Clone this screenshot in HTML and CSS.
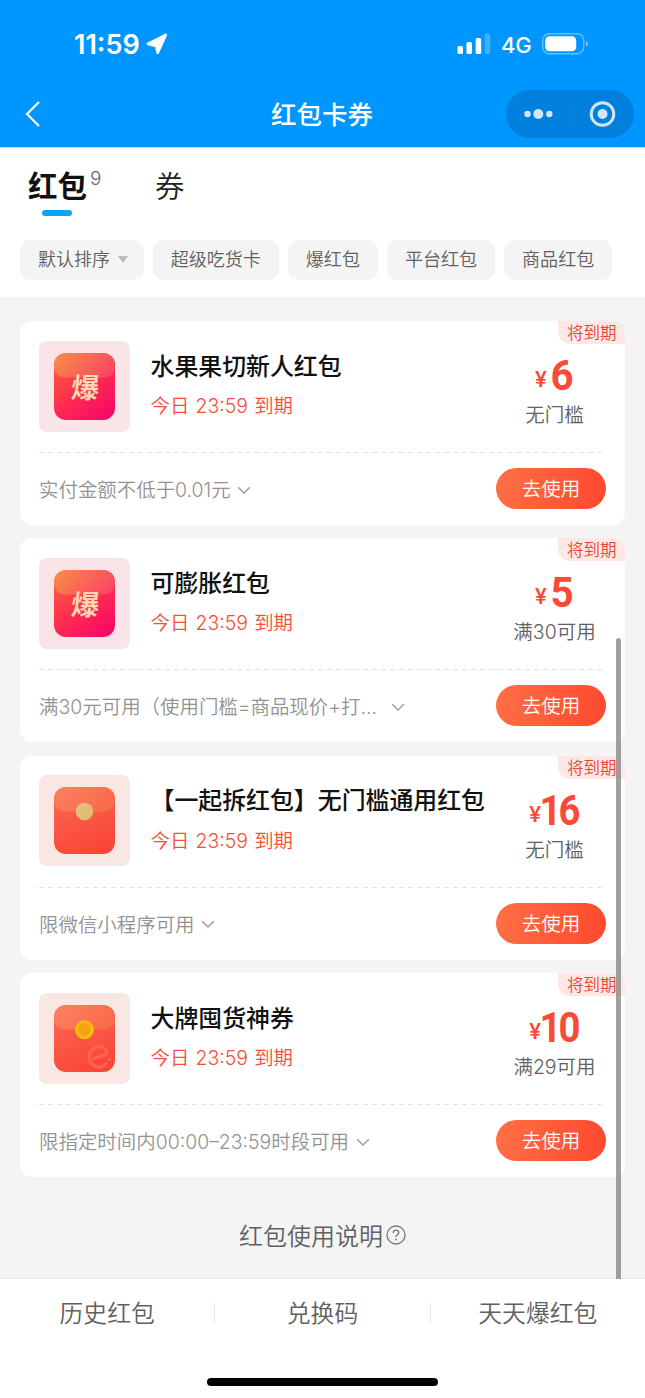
FILE: index.html
```html
<!DOCTYPE html>
<html lang="zh-CN">
<head>
<meta charset="utf-8">
<title>红包卡券</title>
<link rel="stylesheet" href="styles.css">
</head>
<body>
<svg class="sprite" width="0" height="0" aria-hidden="true">
  <defs>
    <linearGradient id="g-hot" x1="0.1" y1="0" x2="0.8" y2="1"><stop offset="0" stop-color="#ff6242"/><stop offset="0.5" stop-color="#fe304d"/><stop offset="1" stop-color="#f90868"/></linearGradient>
    <linearGradient id="g-hot-flap" x1="0" y1="0.2" x2="1" y2="0.6"><stop offset="0" stop-color="#f98b46"/><stop offset="1" stop-color="#f94862"/></linearGradient>
    <linearGradient id="g-red" x1="0.2" y1="0" x2="0.6" y2="1"><stop offset="0" stop-color="#fb6854"/><stop offset="1" stop-color="#fa4636"/></linearGradient>
    <linearGradient id="g-red-flap" x1="0" y1="0" x2="1" y2="0.4"><stop offset="0" stop-color="#fb8260"/><stop offset="1" stop-color="#f96c4c"/></linearGradient>
    <linearGradient id="g-coin" x1="0" y1="0" x2="1" y2="1"><stop offset="0" stop-color="#e4c681"/><stop offset="1" stop-color="#dfb76a"/></linearGradient>
  </defs>
  <symbol id="hot" viewBox="0 0 61 67">
    <rect width="61" height="67" rx="12" fill="url(#g-hot)"/>
    <path d="M0 12A12 12 0 0 1 12 0H49A12 12 0 0 1 61 12V14Q60 24.500 48 24.500H13Q1 24.500 0 14Z" fill="url(#g-hot-flap)"/>
  </symbol>
  <symbol id="plain" viewBox="0 0 61 67">
    <rect width="61" height="67" rx="12" fill="url(#g-red)"/>
    <path d="M0 12A12 12 0 0 1 12 0H49A12 12 0 0 1 61 12V14Q60 24.500 48 24.500H13Q1 24.500 0 14Z" fill="url(#g-red-flap)"/>
  </symbol>
  <symbol id="down" viewBox="0 0 14 9"><path d="M1.200 1.200L7 7L12.800 1.200" fill="none" stroke="#999" stroke-width="1.300"/></symbol>
</svg>

<header class="header">
  <div class="status">
    <span class="time">11:59</span>
    <svg class="locate" width="22" height="22" viewBox="0 0 22 22"><path d="M19.700 1.900L11.700 19.600L10.300 12.800L1.900 10.900Z" fill="#fff" stroke="#fff" stroke-width="2.800" stroke-linejoin="round"/></svg>
    <svg class="signal" width="34" height="22" viewBox="0 0 34 22"><g fill="#fff"><rect x="0.500" y="13" width="5.500" height="8" rx="1.500"/><rect x="9.500" y="9" width="5.500" height="12" rx="1.500"/><rect x="18.700" y="5" width="5.500" height="16" rx="1.500"/><rect x="27.700" y="0.500" width="5.500" height="20.500" rx="1.500" opacity="0.250"/></g></svg>
    <span class="net">4G</span>
    <svg class="battery" width="48" height="22" viewBox="0 0 48 22"><rect x="0.700" y="0.700" width="41" height="20" rx="6.500" fill="none" stroke="#fff" stroke-opacity="0.400" stroke-width="1.400"/><rect x="3.200" y="3.200" width="31" height="15" rx="4.300" fill="#fff"/><path d="M44 7.800Q46.300 8.700 46.300 10.700T44 13.600Z" fill="#fff" opacity="0.400"/></svg>
  </div>
  <div class="nav">
    <svg class="back" width="16" height="28" viewBox="0 0 16 28"><path d="M14 2L2 14L14 26" fill="none" stroke="#fff" stroke-width="2.200"/></svg>
    <h1 class="nav-title">红包卡券</h1>
    <div class="capsule">
      <svg width="128" height="48" viewBox="0 0 128 48"><g fill="#d0e7fa"><circle cx="21.500" cy="24" r="3.200"/><circle cx="32.300" cy="24" r="5"/><circle cx="43.300" cy="24" r="3.200"/><circle cx="96.500" cy="24" r="5"/></g><path d="M64.500 9V39" stroke="#0a84da" stroke-width="1"/><circle cx="96.500" cy="24" r="11.300" fill="none" stroke="#d0e7fa" stroke-width="3"/></svg>
    </div>
  </div>
</header>

<section class="filters">
  <div class="tabs">
    <div class="tab tab-active">红包<sup class="count">9</sup></div>
    <div class="tab">券</div>
  </div>
  <div class="chips">
    <span class="chip">默认排序<i class="caret"></i></span>
    <span class="chip">超级吃货卡</span>
    <span class="chip">爆红包</span>
    <span class="chip">平台红包</span>
    <span class="chip">商品红包</span>
  </div>
</section>

<main class="list">
  <article class="card">
    <span class="badge">将到期</span>
    <div class="card-main">
      <div class="thumb thumb-pink"><svg width="61" height="67"><use href="#hot"/><text class="bao" x="0" y="0" transform="translate(16.500 44.500) skewX(-5)">爆</text></svg></div>
      <div class="info"><h2 class="name">水果果切新人红包</h2><p class="expire">今日 <span class="num">23:59</span> 到期</p></div>
      <div class="price"><div class="amount"><span class="yen">¥</span><span class="value">6</span></div><div class="limit">无门槛</div></div>
    </div>
    <div class="card-foot"><p class="rule">实付金额不低于<span class="num">0.01</span>元</p><svg class="down" width="14" height="9"><use href="#down"/></svg><a class="use">去使用</a></div>
  </article>
  <article class="card">
    <span class="badge">将到期</span>
    <div class="card-main">
      <div class="thumb thumb-pink"><svg width="61" height="67"><use href="#hot"/><text class="bao" x="0" y="0" transform="translate(16.500 44.500) skewX(-5)">爆</text></svg></div>
      <div class="info"><h2 class="name">可膨胀红包</h2><p class="expire">今日 <span class="num">23:59</span> 到期</p></div>
      <div class="price"><div class="amount"><span class="yen">¥</span><span class="value">5</span></div><div class="limit">满<span class="num">30</span>可用</div></div>
    </div>
    <div class="card-foot"><p class="rule rule-long">满<span class="num">30</span>元可用（使用门槛<span class="num">=</span>商品现价<span class="num">+</span>打<span class="num">…</span></p><svg class="down" width="14" height="9"><use href="#down"/></svg><a class="use">去使用</a></div>
  </article>
  <article class="card">
    <span class="badge">将到期</span>
    <div class="card-main">
      <div class="thumb"><svg width="61" height="67"><use href="#plain"/><circle cx="30.500" cy="24.500" r="8.700" fill="url(#g-coin)"/></svg></div>
      <div class="info"><h2 class="name">【一起拆红包】无门槛通用红包</h2><p class="expire">今日 <span class="num">23:59</span> 到期</p></div>
      <div class="price"><div class="amount"><span class="yen">¥</span><span class="value value-wide">16</span></div><div class="limit">无门槛</div></div>
    </div>
    <div class="card-foot"><p class="rule">限微信小程序可用</p><svg class="down" width="14" height="9"><use href="#down"/></svg><a class="use">去使用</a></div>
  </article>
  <article class="card">
    <span class="badge">将到期</span>
    <div class="card-main">
      <div class="thumb"><svg width="61" height="67"><use href="#plain"/><path d="M38 54L53 49C52 42 45 39.500 39.500 43.500C34 48 34 56 39 60C44 64 50 62 53 57.500" fill="none" stroke="#fb6450" stroke-width="3.200" stroke-linejoin="round"/><circle cx="55.500" cy="54.500" r="1.800" fill="#fb6450"/><circle cx="30.500" cy="24.800" r="9.500" fill="#f9ba0b"/><circle cx="30.500" cy="24.500" r="6.300" fill="#f6a114"/></svg></div>
      <div class="info"><h2 class="name">大牌囤货神券</h2><p class="expire">今日 <span class="num">23:59</span> 到期</p></div>
      <div class="price"><div class="amount"><span class="yen">¥</span><span class="value value-wide">10</span></div><div class="limit">满<span class="num">29</span>可用</div></div>
    </div>
    <div class="card-foot"><p class="rule">限指定时间内<span class="num">00:00–23:59</span>时段可用</p><svg class="down" width="14" height="9"><use href="#down"/></svg><a class="use">去使用</a></div>
  </article>

  <div class="help">红包使用说明<svg width="20" height="20" viewBox="0 0 20 20"><circle cx="10" cy="10" r="9" fill="none" stroke="#777" stroke-width="1.300"/><path d="M7.200 8Q7.300 5.200 10 5.200T12.800 7.700C12.800 9.600 10 9.600 10 12" fill="none" stroke="#777" stroke-width="1.300"/><circle cx="10" cy="14.500" r="0.900" fill="#777"/></svg></div>
</main>
<div class="scrollbar"></div>

<footer class="footer">
  <nav class="footer-nav">
    <a class="footer-item">历史红包</a>
    <a class="footer-item">兑换码</a>
    <a class="footer-item">天天爆红包</a>
  </nav>
  <div class="home-bar"></div>
</footer>
</body>
</html>
```
FILE: styles.css
```css
* { box-sizing: border-box; margin: 0; padding: 0; }
body {
  width: 645px;
  height: 1398px;
  display: flex;
  flex-direction: column;
  position: relative;
  overflow: hidden;
  background: #f4f4f4;
  color: #111;
  font-family: "Noto Sans CJK SC", sans-serif;
  font-weight: 350;
}
svg { display: block; flex: none; }
.sprite { position: absolute; }
.num { font-family: Inter, "Liberation Sans", sans-serif; font-weight: 300; }

.header { height: 147px; flex: none; background: #0096ff; color: #fff; }
.status { height: 81px; padding: 7px 55px 0 74px; display: flex; align-items: center; }
.time { width: 72px; margin-top: 1px; font: 600 27px/32px Inter, sans-serif; letter-spacing: 0; }
.signal { margin-left: auto; }
.net { margin: 1px 11px 0 10px; width: 30px; font: 500 22px/28px Inter, sans-serif; letter-spacing: -0.3px; }
.nav { height: 66px; padding: 0 11px 0 25px; display: grid; grid-template-columns: 128px 1fr 128px; align-items: center; }
.nav-title { text-align: center; font-size: 25.500px; line-height: 34px; font-weight: 500; padding: 0 15px 2px 0; }
.capsule { width: 128px; height: 48px; border-radius: 24px; background: #0080dc; }

.filters { height: 150px; flex: none; background: #fff; border-top: 1px solid #a6ecff; }
.tabs { height: 92px; padding: 16px 27px 0 28px; display: flex; gap: 54px; }
.tab { font-size: 29.500px; line-height: 40px; color: #222; height: 53px; white-space: nowrap; }
.tab-active { display: flex; font-weight: 700; width: 73px; color: #111; position: relative; }
.tab-active::after { content: ""; position: absolute; left: 14px; bottom: 1px; width: 30px; height: 6px; border-radius: 3px; background: #0aa6ee; }
.count { font: 300 19px/24px Inter, sans-serif; color: #666; margin: 3px 0 0 3px; }
.chips { display: flex; gap: 9px; padding-left: 20px; }
.chip { height: 40px; padding: 0 18px 4px; border-radius: 10px; background: #f4f4f4; color: #606060; font-size: 18.050px; line-height: 36px; display: flex; align-items: center; white-space: nowrap; }
.caret { margin: 3px -2px 0 7.500px; border: 5.500px solid transparent; border-top: 7px solid #bbb; border-bottom: 0; }

.list { flex: 1; padding: 24px 20px 0; display: flex; flex-direction: column; gap: 13.450px; }
.card { position: relative; height: 204px; flex: none; padding: 0 19px; background: #fff; border-radius: 12px; }
.badge { position: absolute; top: 0; right: 0; width: 67px; height: 23px; padding-left: 9px; border-radius: 0 12px 0 12px; background: #ffe7e5; color: #e54532; font-size: 16.500px; line-height: 22px; white-space: nowrap; }
.card-main { height: 132px; padding-top: 19.500px; display: flex; background: repeating-linear-gradient(90deg, #e2e2e2 0 5px, transparent 5px 9px) left bottom / 100% 1px no-repeat; }
.thumb { width: 91px; height: 91px; flex: none; padding: 12px 15px; border-radius: 8px; background: #f9e7e4; }
.thumb-pink { background: #f9e5e7; }
.bao { font: 700 28px "Noto Sans CJK SC", sans-serif; fill: #ffd8b0; }
.info { padding: 5px 0 0 20.500px; white-space: nowrap; }
.name { font-size: 23.900px; line-height: 37px; font-weight: 500; }
.expire { margin-top: 7.500px; font-size: 19.400px; line-height: 30px; color: #f94d35; word-spacing: 2px; }
.price { position: absolute; right: 15.500px; top: 32px; width: 110px; text-align: center; }
.amount { height: 46px; display: flex; justify-content: center; font: 700 42.500px/46px Roboto, sans-serif; color: #f94a35; }
.yen { font-size: 22px; line-height: 54px; margin-right: 3px; font-weight: 500; }
.value { transform: scaleX(0.95); }
.value-wide { letter-spacing: -3.500px; margin: 0 -1px 0 -5px; transform: translateX(-1.500px) scaleX(0.9); }
.limit { font-size: 19.500px; line-height: 30px; color: #606060; white-space: nowrap; }
.card-foot { height: 72px; display: flex; align-items: center; }
.rule { font-size: 19.450px; line-height: 30px; color: #929292; white-space: nowrap; }
.rule-long { margin-right: 8px; }
.down { margin: 2px 0 0 6.500px; }
.use { margin: 0 0 1px auto; width: 110px; height: 41px; border-radius: 21px; background: linear-gradient(100deg, #ff7045, #ff482f); color: #fff; font-size: 19.500px; line-height: 39px; text-align: center; }
.help { display: flex; justify-content: center; gap: 3px; align-items: center; margin-top: 26px; font-size: 24px; line-height: 36px; color: #606060; }
.scrollbar { position: absolute; left: 616px; top: 638px; width: 5px; height: 641px; border-radius: 3px 3px 0 0; background: rgba(128, 128, 128, 0.75); }

.footer { height: 119px; flex: none; background: #fff; display: flex; flex-direction: column; align-items: center; justify-content: space-between; padding-bottom: 12px; box-shadow: 0 -1px 2px rgba(0, 0, 0, 0.06); }
.footer-nav { width: 100%; display: flex; padding-top: 24px; }
.footer-item { flex: 1; height: 20px; line-height: 18px; text-align: center; font-size: 23.800px; color: #606060; }
.footer-item + .footer-item { border-left: 1px solid #e6e6e6; }
.home-bar { width: 231px; height: 8px; border-radius: 4px; background: #000; }
```
